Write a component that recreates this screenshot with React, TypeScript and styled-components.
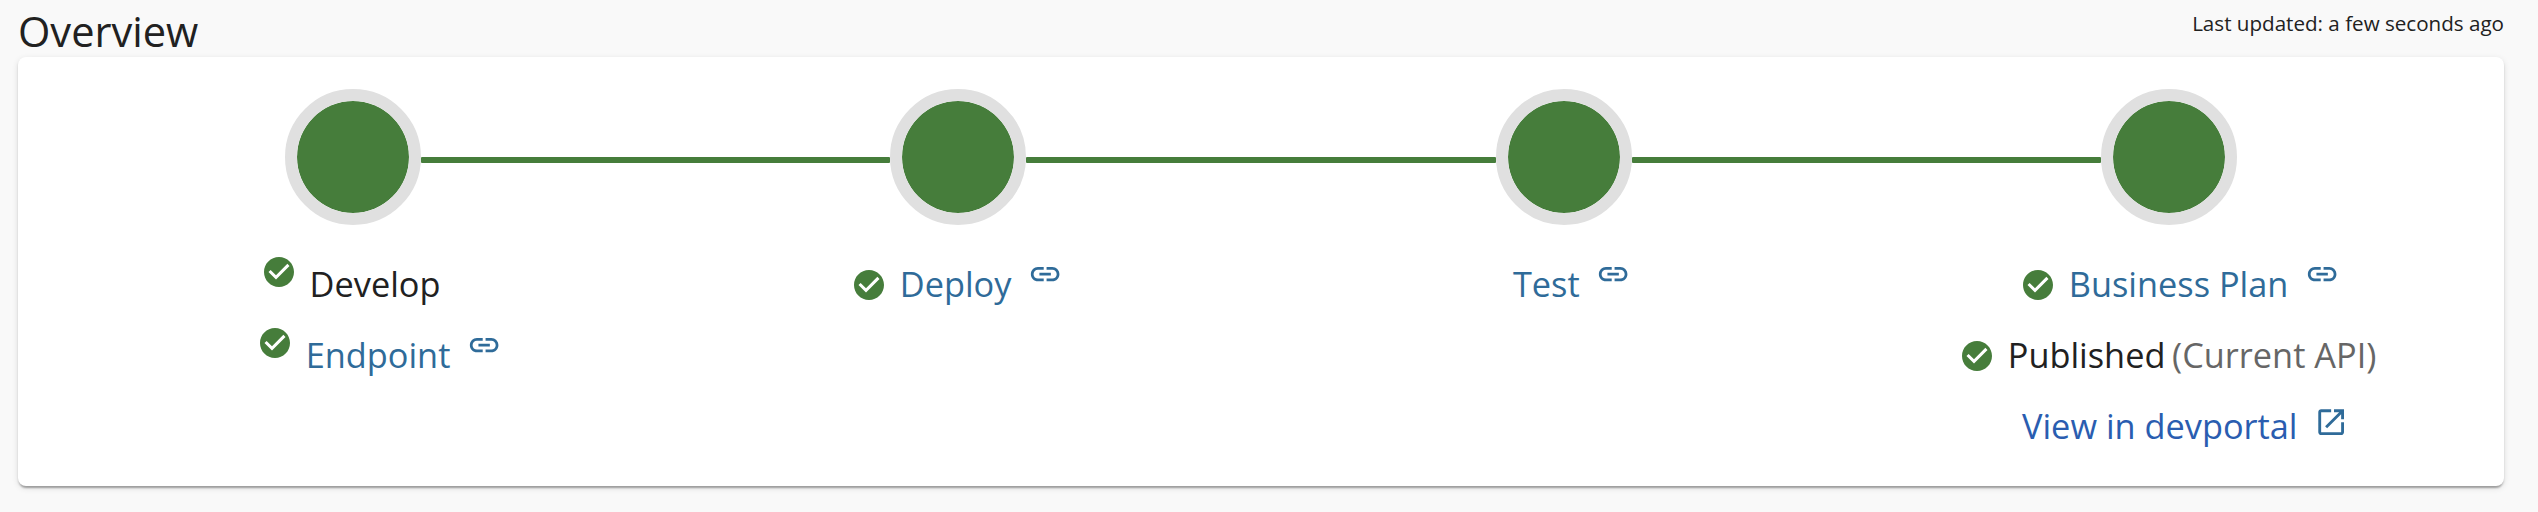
import React from 'react';
import styled, { createGlobalStyle } from 'styled-components';

const GlobalStyle = createGlobalStyle`
  * { box-sizing: border-box; }
  body {
    margin: 0;
    background: #f9f9f9;
    color: #212121;
    font-family: "Open Sans", sans-serif;
    -webkit-font-smoothing: antialiased;
  }
`;

const Page = styled.main`
  display: flex;
  flex-direction: column;
  height: 512px;
  padding: 0 34px 26px 18px;
`;

const Header = styled.header`
  display: flex;
  flex: none;
  justify-content: space-between;
  align-items: flex-start;
  height: 57px;
`;

const Title = styled.h1`
  margin: 0;
  padding-top: 4px;
  font-size: 41.6px;
  font-weight: 400;
  line-height: 54px;
`;

const Updated = styled.span`
  padding-top: 6px;
  font-size: 20.6px;
  line-height: 34px;
`;

const Card = styled.section`
  flex: 1;
  padding: 32px;
  border-radius: 8px;
  background: #fff;
  box-shadow: 0 4px 2px -2px rgba(0, 0, 0, 0.2), 0 2px 2px rgba(0, 0, 0, 0.14),
    0 2px 6px rgba(0, 0, 0, 0.12);
`;

const Track = styled.div`
  display: flex;
  align-items: center;
  padding: 0 235px;
`;

const Dot = styled.div`
  flex: none;
  width: 136px;
  height: 136px;
  border-radius: 50%;
  border: 12px solid #e0e0e0;
  background: #467d3b;
  background-clip: padding-box;
`;

const Connector = styled.div`
  flex: 1;
  height: 6px;
  margin-top: 6px;
  border-radius: 1px;
  background: #467d3b;
`;

const Steps = styled.div`
  display: grid;
  grid-template-columns: repeat(4, 1fr);
  padding-top: 31px;
`;

const Step = styled.div`
  display: flex;
  flex-direction: column;
  gap: 16px;
`;

const Row = styled.div<{ $indent?: number }>`
  display: flex;
  align-items: center;
  justify-content: center;
  height: 55px;
  margin-left: ${(p) => p.$indent ?? 0}px;
  font-size: 34.32px;
  line-height: 55px;
  white-space: nowrap;
`;

const StepLink = styled.a<{ $external?: boolean }>`
  color: ${(p) => (p.$external ? '#2a5db0' : '#2f6b99')};
  text-decoration: none;
`;

const Note = styled.span`
  margin-left: 6.6px;
  color: #666;
`;

const CheckSvg = styled.svg<{ $raised?: boolean }>`
  flex: none;
  width: 36px;
  height: 36px;
  margin: ${(p) => (p.$raised ? '-23px 12.6px 0 0' : '3px 12.6px 0 0')};
  fill: #467d3b;
`;

const ActionSvg = styled.svg<{ $lift: number }>`
  flex: none;
  width: 34.286px;
  height: 34.286px;
  margin: 0 0 ${(p) => p.$lift}px 16.7px;
  fill: #2f6b99;
`;

const Check = ({ raised }: { raised?: boolean }) => (
  <CheckSvg viewBox="0 0 24 24" $raised={raised}>
    <path d="M12 2C6.48 2 2 6.48 2 12s4.48 10 10 10 10-4.48 10-10S17.52 2 12 2zm-2 15l-5-5 1.41-1.41L10 14.17l7.59-7.59L19 8l-9 9z" />
  </CheckSvg>
);

const LinkIcon = () => (
  <ActionSvg viewBox="0 0 24 24" $lift={19}>
    <path d="M3.9 12c0-1.71 1.39-3.1 3.1-3.1h4V7H7c-2.76 0-5 2.24-5 5s2.24 5 5 5h4v-1.9H7c-1.71 0-3.1-1.39-3.1-3.1zM8 13h8v-2H8v2zm9-6h-4v1.9h4c1.71 0 3.1 1.39 3.1 3.1s-1.39 3.1-3.1 3.1h-4V17h4c2.76 0 5-2.24 5-5s-2.24-5-5-5z" />
  </ActionSvg>
);

const OpenIcon = () => (
  <ActionSvg viewBox="0 0 24 24" $lift={7}>
    <path d="M19 19H5V5h7V3H5c-1.11 0-2 .9-2 2v14c0 1.1.89 2 2 2h14c1.1 0 2-.9 2-2v-7h-2v7zM14 3v2h3.59l-9.83 9.83 1.41 1.41L19 6.41V10h2V3h-7z" />
  </ActionSvg>
);

export default function App() {
  return (
    <>
      <GlobalStyle />
      <Page>
        <Header>
          <Title>Overview</Title>
          <Updated>Last updated: a few seconds ago</Updated>
        </Header>
        <Card>
          <Track>
            <Dot />
            <Connector />
            <Dot />
            <Connector />
            <Dot />
            <Connector />
            <Dot />
          </Track>
          <Steps>
            <Step>
              <Row $indent={-4}>
                <Check raised />
                <span>Develop</span>
              </Row>
              <Row $indent={53}>
                <Check raised />
                <StepLink>Endpoint</StepLink>
                <LinkIcon />
              </Row>
            </Step>
            <Step>
              <Row $indent={-3}>
                <Check />
                <StepLink>Deploy</StepLink>
                <LinkIcon />
              </Row>
            </Step>
            <Step>
              <Row $indent={16}>
                <StepLink>Test</StepLink>
                <LinkIcon />
              </Row>
            </Step>
            <Step>
              <Row $indent={21}>
                <Check />
                <StepLink>Business Plan</StepLink>
                <LinkIcon />
              </Row>
              <Row $indent={-3}>
                <Check />
                <span>Published</span>
                <Note>(Current API)</Note>
              </Row>
              <Row $indent={32}>
                <StepLink $external>View in devportal</StepLink>
                <OpenIcon />
              </Row>
            </Step>
          </Steps>
        </Card>
      </Page>
    </>
  );
}
